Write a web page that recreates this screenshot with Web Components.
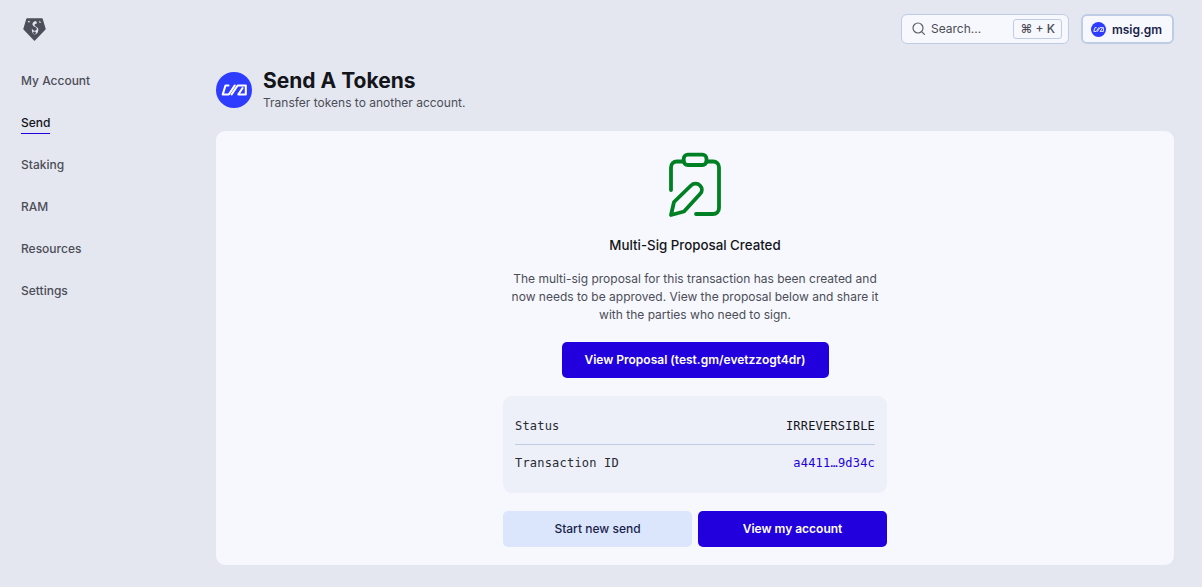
<!DOCTYPE html>
<html lang="en">
<head>
<meta charset="utf-8">
<title>Send A Tokens</title>
<style>
	html, body { margin: 0; height: 100%; }
	body {
		background: #e4e7f0;
		font-family: Inter, "Liberation Sans", sans-serif;
		overflow: hidden;
	}
</style>
</head>
<body>
<app-shell>
	<side-nav slot="nav"></side-nav>
	<top-bar slot="top"></top-bar>
	<page-title slot="head" heading="Send A Tokens" sub="Transfer tokens to another account."></page-title>
	<proposal-card slot="body"></proposal-card>
</app-shell>

<script>
class TokenIcon extends HTMLElement {
	constructor() {
		super();
		const size = this.getAttribute('size') || 36;
		this.attachShadow({ mode: 'open' }).innerHTML = /*html*/`
			<style>
				:host { display: block; width: ${size}px; height: ${size}px; flex: none; }
				svg { display: block; }
			</style>
			<svg width="${size}" height="${size}" viewBox="0 0 36 36">
				<circle cx="18" cy="18" r="18" fill="#2d3cff"/>
				<g fill="none" stroke="#fff" stroke-width="2.1" stroke-linejoin="round" stroke-linecap="round">
					<path d="M12.5 13.5 H9.5 L6.7 22.5 H12.8 L18.7 13.5"/>
					<path d="M15.6 22.5 L21.6 13.5 H29.8 V22.5 H22.4"/>
					<path d="M22.6 22 L26.6 16"/>
				</g>
			</svg>
		`;
	}
}
customElements.define('token-icon', TokenIcon);

class AppShell extends HTMLElement {
	constructor() {
		super();
		this.attachShadow({ mode: 'open' }).innerHTML = /*html*/`
			<style>
				:host { display: grid; grid-template-columns: 216px 958px; height: 587px; }
				main { display: flex; flex-direction: column; padding-top: 14px; }
			</style>
			<slot name="nav"></slot>
			<main>
				<slot name="top"></slot>
				<slot name="head"></slot>
				<slot name="body"></slot>
			</main>
		`;
	}
}
customElements.define('app-shell', AppShell);

class SideNav extends HTMLElement {
	constructor() {
		super();
		const items = ['My Account', 'Send', 'Staking', 'RAM', 'Resources', 'Settings'];
		this.attachShadow({ mode: 'open' }).innerHTML = /*html*/`
			<style>
				:host { display: block; padding: 18px 0 0 21px; }
				svg { display: block; margin-left: 2px; }
				ul { list-style: none; margin: 29px 0 0; padding: 0; display: flex; flex-direction: column; gap: 21px; }
				li { display: flex; height: 21px; }
				a {
					display: block;
					height: 21px;
					font-size: 12px;
					line-height: 21px;
					font-weight: 500;
					color: #4c4d57;
				}
				a.on { color: #14151a; box-shadow: 0 1px 0 0 #2200dd; }
			</style>
			<svg width="23" height="23" viewBox="0 0 23 23">
				<path d="M4 1 H19 L22 11 L11.5 22 L1 11 Z" fill="#4c4f5a" stroke="#4c4f5a" stroke-width="1.4" stroke-linejoin="round"/>
				<path d="M13 3 C10.4 3.6 9 5.2 9.6 7 C10.2 8.6 13.4 8.8 13.8 10.4 C14.2 12 12.4 13.2 10.6 12.4 L8.8 10.8 C8.8 13.8 9.8 16.4 11.6 16.6 C14 16.4 15.8 13.6 15.2 10.8 C14.8 9 12 8.6 11.6 7.2 C11.4 6.2 12.6 5.6 14.2 5.6 Z M4.6 3.2 L6.8 2.8 L6.2 5 Z M16.8 2.6 L18 5 L16 4.6 Z" fill="#e4e7f0"/>
				<path d="M11.5 13.4 a1.4 1.4 0 1 0 .01 0" fill="#4c4f5a"/>
			</svg>
			<ul>
				${items.map(i => `<li><a class="${i === 'Send' ? 'on' : ''}">${i}</a></li>`).join('')}
			</ul>
		`;
	}
}
customElements.define('side-nav', SideNav);

class TopBar extends HTMLElement {
	constructor() {
		super();
		this.attachShadow({ mode: 'open' }).innerHTML = /*html*/`
			<style>
				:host { display: flex; justify-content: flex-end; gap: 12px; height: 30px; }
				.search {
					box-sizing: border-box;
					width: 168px;
					display: flex;
					align-items: center;
					padding: 0 6px 1px 9px;
					gap: 5px;
					background: #f6f8fd;
					border: 1px solid #bfcce5;
					border-radius: 6px;
					font-size: 12px;
					color: #4c4d57;
				}
				.search span { flex: 1; }
				kbd {
					box-sizing: border-box;
					height: 20px;
					padding: 0 6px;
					display: flex;
					align-items: center;
					border: 1px solid #bfcce5;
					border-radius: 3px;
					font: 500 12px Inter, sans-serif;
				}
				.acct {
					box-sizing: border-box;
					width: 93px;
					display: flex;
					align-items: center;
					justify-content: center;
					gap: 6px;
					padding-right: 2px;
					background: #f6f8fd;
					border: 2px solid #bfcce5;
					border-radius: 6px;
					font-size: 12px;
					font-weight: 600;
					color: #1a1e4a;
				}
			</style>
			<div class="search">
				<svg width="15" height="15" viewBox="0 0 15 15" fill="none" stroke="#5c5e68" stroke-width="1.2" stroke-linecap="round"><circle cx="7" cy="7" r="5"/><path d="M10.7 10.7 13.4 13.4"/></svg>
				<span>Search...</span>
				<kbd>⌘ + K</kbd>
			</div>
			<div class="acct"><token-icon size="15"></token-icon>msig.gm</div>
		`;
	}
}
customElements.define('top-bar', TopBar);

class PageTitle extends HTMLElement {
	constructor() {
		super();
		this.attachShadow({ mode: 'open' }).innerHTML = /*html*/`
			<style>
				:host { display: flex; align-items: center; gap: 11px; margin: 25px 0 20px; height: 42px; }
				h1 { margin: 0; font-size: 21px; line-height: 24px; font-weight: 700; color: #14151a; }
				p { margin: 2px 0 0; font-size: 12px; line-height: 16px; color: #4c4d57; }
			</style>
			<token-icon></token-icon>
			<div>
				<h1>${this.getAttribute('heading')}</h1>
				<p>${this.getAttribute('sub')}</p>
			</div>
		`;
	}
}
customElements.define('page-title', PageTitle);

class InfoRow extends HTMLElement {
	constructor() {
		super();
		this.attachShadow({ mode: 'open' }).innerHTML = /*html*/`
			<style>
				:host {
					display: flex;
					justify-content: space-between;
					align-items: center;
					height: 37px;
					font-family: "DejaVu Sans Mono", "Liberation Mono", monospace;
					font-size: 12px;
					letter-spacing: .2px;
					color: #2a2b33;
				}
				:host([line]) { border-bottom: 1px solid #bfcce5; }
				:host(:not([line])) { height: 36px; }
				::slotted([slot="value"]) { color: #14151a; }
			</style>
			<slot name="label"></slot>
			<slot name="value"></slot>
		`;
	}
}
customElements.define('info-row', InfoRow);

class ActionButton extends HTMLElement {
	constructor() {
		super();
		this.attachShadow({ mode: 'open' }).innerHTML = /*html*/`
			<style>
				:host {
					display: flex;
					align-items: center;
					justify-content: center;
					box-sizing: border-box;
					height: 36px;
					padding-bottom: 1px;
					border-radius: 5px;
					background: #2200dd;
					color: #fff;
					font-size: 12px;
					font-weight: 600;
				}
				:host([soft]) { background: #dbe6fd; color: #1a1e4a; font-weight: 500; }
			</style>
			<slot></slot>
		`;
	}
}
customElements.define('action-button', ActionButton);

class ProposalCard extends HTMLElement {
	constructor() {
		super();
		this.attachShadow({ mode: 'open' }).innerHTML = /*html*/`
			<style>
				:host {
					display: flex;
					flex-direction: column;
					align-items: center;
					box-sizing: border-box;
					height: 434px;
					padding-top: 20px;
					background: #f6f8fd;
					border-radius: 9px;
				}
				svg { display: block; }
				h2 { margin: 16px 0 0; font-size: 13.3px; line-height: 24px; font-weight: 500; color: #14151a; }
				p { margin: 13px 0 0; width: 384px; font-size: 12px; line-height: 18px; text-align: center; color: #4c4d57; }
				.view { width: 267px; margin-top: 18px; }
				.info {
					box-sizing: border-box;
					width: 384px;
					height: 97px;
					margin-top: 18px;
					padding: 11px 12px;
					background: #edf0f8;
					border-radius: 9px;
				}
				.hash { color: #2200dd; }
				.actions { display: grid; grid-template-columns: 189px 189px; gap: 6px; margin-top: 18px; }
			</style>
			<svg width="56" height="66" viewBox="0 0 56 66" fill="none" stroke="#008024" stroke-width="3.8" stroke-linecap="round" stroke-linejoin="round">
				<rect x="16.7" y="3.7" width="22.8" height="10.3" rx="4"/>
				<path d="M16.7 10.5 H10 C6.5 10.5 4 13 4 16.5 V39"/>
				<path d="M39.5 10.5 H46 C49.5 10.5 52 13 52 16.5 V57 C52 60.5 49.5 63 46 63 H29"/>
				<path d="M4 64 L7 51 L24 34.5 C26.5 32 30.5 32 33 34.5 C35.5 37 35.5 40.5 33 43 L17 60.5 Z"/>
			</svg>
			<h2>Multi-Sig Proposal Created</h2>
			<p>The multi-sig proposal for this transaction has been created and now needs to be approved. View the proposal below and share it with the parties who need to sign.</p>
			<action-button class="view">View Proposal (test.gm/evetzzogt4dr)</action-button>
			<div class="info">
				<info-row line><span slot="label">Status</span><span slot="value">IRREVERSIBLE</span></info-row>
				<info-row><span slot="label">Transaction ID</span><span slot="value" class="hash">a4411…9d34c</span></info-row>
			</div>
			<div class="actions">
				<action-button soft>Start new send</action-button>
				<action-button>View my account</action-button>
			</div>
		`;
	}
}
customElements.define('proposal-card', ProposalCard);
</script>
</body>
</html>
